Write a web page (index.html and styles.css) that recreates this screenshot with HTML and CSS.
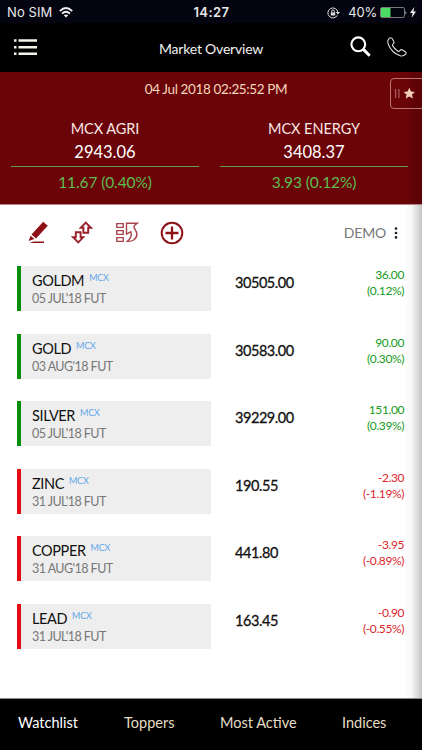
FILE: index.html
```html
<!DOCTYPE html>
<html lang="en">
<head>
<meta charset="utf-8">
<title>Market Overview</title>
<link rel="stylesheet" href="styles.css">
</head>
<body>
<div class="app">
  <div class="status">
    <div class="carrier">No SIM
      <svg width="14" height="11" viewBox="0 0 14 11" fill="none" stroke="#eee" stroke-width="1.9"><path d="M.8 4.1Q7-1.9 13.2 4.1M3 6.6Q7 2.9 11 6.6"/><path d="M7 10.6 4.8 8.3Q7 6.500 9.200 8.300Z" fill="#eee" stroke="none"/></svg>
    </div>
    <div class="clock">14:27</div>
    <div class="power">
      <svg width="13" height="12" viewBox="0 0 13 12" fill="none" stroke="#ddd"><path d="M10.300 8.300A5 5 0 1 1 10.800 5"/><path d="M8.700 5h4.300l-2.100 2.600z" fill="#ddd" stroke="none"/><path d="M3.800 5.500h4.400v3H3.800z" fill="#ddd" stroke="none"/><path d="M4.700 6V4.200a1.300 1.300 0 0 1 2.600 0V6"/></svg>
      <span class="pct">40%</span>
      <svg width="27" height="11" viewBox="0 0 27 11"><rect x=".5" y=".5" width="24" height="10" rx="1.500" fill="none" stroke="#777"/><rect x="1" y="1" width="9.500" height="9" fill="#4cd964"/><path d="M25.500 3.500q1.500 2 0 4z" fill="#ccc"/></svg>
      <svg class="bolt" width="6" height="11" viewBox="0 0 6 11"><path d="M4.300 0 0 6h2.600L1.600 11 6 4.600H3.400z" fill="#eee"/></svg>
    </div>
  </div>
  <header class="nav">
    <svg class="menu" width="23" height="17" viewBox="0 0 23 17" fill="#f4f4ea"><path d="M0 .3h2.500v2.500H0zM4.500.3H23v2.500H4.500zM0 6.900h2.500v2.500H0zM4.500 6.900H23v2.500H4.500zM0 13.500h2.500V16H0zM4.500 13.500H23V16H4.500z"/></svg>
    <h1 class="title">Market Overview</h1>
    <svg class="search" width="21" height="21" viewBox="0 0 21 21" fill="none" stroke="#fff"><circle cx="8.300" cy="8.300" r="6.900" stroke-width="2.100"/><path d="m13.400 13.400 6.300 6.300" stroke-width="3"/></svg>
    <svg class="phone" width="20" height="20" viewBox="0 0 20 20" fill="none" stroke="#ddd" stroke-width="1.100" stroke-linejoin="round"><path d="M1.300 2.500Q2.300.6 4 .7 5.200.8 6.700 4.200 7.500 5.900 6.200 6.900 5 7.700 5.700 8.900 7.700 12.300 11 14.200 12.200 14.800 12.900 13.500 13.900 12.100 15.500 13L18.600 15Q19.600 15.900 18.600 17.100 16.300 19.700 13.200 18.800 4.500 15.800 1.100 6.700.4 4.400 1.300 2.500Z"/></svg>
  </header>
  <section class="summary">
    <div class="date">04 Jul 2018 02:25:52 PM</div>
    <div class="indices">
      <div class="index"><div class="iname">MCX AGRI</div><div class="ival">2943.06</div><div class="ichg">11.67 (0.40%)</div></div>
      <div class="index"><div class="iname">MCX ENERGY</div><div class="ival">3408.37</div><div class="ichg">3.93 (0.12%)</div></div>
    </div>
    <div class="fav"><svg width="22" height="13" viewBox="0 0 22 13"><path d="M.6 2v9M3.900 2v9" stroke="#ad6464" stroke-width="1.100"/><path d="m14.300.8 1.700 3.700 4 .4-3 2.700.9 4-3.600-2.100-3.600 2.100.9-4-3-2.700 4-.4z" fill="#efcfb6"/></svg></div>
  </section>
  <main class="content">
    <div class="tools">
      <svg class="t1" width="21" height="23" viewBox="0 0 21 23" fill="#8f1118"><path d="M3.500 13.500 15.200.8l4.600 4L8 17.500zM2.600 14.800l3.800 3.300L.6 20zM5.500 20.400H16V22H1.500z"/></svg>
      <svg class="t2" width="22" height="23" viewBox="0 0 22 23" fill="none" stroke="#98202a" stroke-width="1.900"><path d="M14.800 1.700l5 5h-2.600v5.100h-4.800V6.700H9.800zM7.200 21.300l-5-5h2.600v-5.100h4.800v5.100h2.600z"/></svg>
      <svg class="t3" width="23" height="21" viewBox="0 0 23 21" fill="none" stroke="#a9444c" stroke-width="1.400"><path d="M.8 1.600h6.400v3.800H.8zM.8 8.600h6.400v3.800H.8zM.8 15.600h6.400v3.800H.8zM10.500 1.300H21Q16.500 3.800 18.800 7q4.600 6.600-1.200 11-2.600 1.600-6.300 1.300Q16.500 15 14.800 9.800L10.500 12z"/></svg>
      <svg class="t4" width="24" height="24" viewBox="0 0 24 24" fill="none" stroke="#8f1118"><circle cx="12" cy="12" r="10.300" stroke-width="2"/><path d="M12 5.500v13M5.500 12h13" stroke-width="2.300"/></svg>
      <span class="demo">DEMO</span>
      <svg class="more" width="4" height="12" viewBox="0 0 4 12" fill="#222"><circle cx="2" cy="1.600" r="1.300"/><circle cx="2" cy="6" r="1.300"/><circle cx="2" cy="10.400" r="1.300"/></svg>
    </div>
    <div class="row up"><div class="card"><div class="sym">GOLDM<span class="mcx">MCX</span></div><div class="exp">05 JUL'18 FUT</div></div><div class="price">30505.00</div><div class="chg">36.00<br>(0.12%)</div></div>
    <div class="row up"><div class="card"><div class="sym">GOLD<span class="mcx">MCX</span></div><div class="exp">03 AUG'18 FUT</div></div><div class="price">30583.00</div><div class="chg">90.00<br>(0.30%)</div></div>
    <div class="row up"><div class="card"><div class="sym">SILVER<span class="mcx">MCX</span></div><div class="exp">05 JUL'18 FUT</div></div><div class="price">39229.00</div><div class="chg">151.00<br>(0.39%)</div></div>
    <div class="row down"><div class="card"><div class="sym">ZINC<span class="mcx">MCX</span></div><div class="exp">31 JUL'18 FUT</div></div><div class="price short">190.55</div><div class="chg">-2.30<br>(-1.19%)</div></div>
    <div class="row down"><div class="card"><div class="sym">COPPER<span class="mcx">MCX</span></div><div class="exp">31 AUG'18 FUT</div></div><div class="price short">441.80</div><div class="chg">-3.95<br>(-0.89%)</div></div>
    <div class="row down"><div class="card"><div class="sym">LEAD<span class="mcx">MCX</span></div><div class="exp">31 JUL'18 FUT</div></div><div class="price short">163.45</div><div class="chg">-0.90<br>(-0.55%)</div></div>
  </main>
  <nav class="tabs"><span class="tab active">Watchlist</span><span class="tab">Toppers</span><span class="tab">Most Active</span><span class="tab">Indices</span></nav>
</div>
</body>
</html>
```
FILE: styles.css
```css
* { box-sizing: border-box; }
body { margin: 0; background: #000; font-family: Lato, "Open Sans", sans-serif; }
svg { display: block; flex: none; }
.app { width: 422px; height: 750px; display: flex; flex-direction: column; overflow: hidden; }
.status { height: 23px; flex: none; background: #03040f; color: #e8e8e8; display: grid; grid-template-columns: 1fr auto 1fr; align-items: center; font: 13px/23px Inter, sans-serif; padding: 1px 6px 0 7px; }
.carrier { display: flex; gap: 7px; align-items: center; letter-spacing: .1px; }
.clock { font-weight: 600; letter-spacing: .45px; }
.power { display: flex; align-items: center; justify-content: flex-end; }
.pct { margin: 0 3px 0 8px; letter-spacing: -.2px; }
.bolt { margin-left: 3px; }
.nav { height: 49px; flex: none; display: flex; align-items: center; padding: 0 15px 0 14px; color: #f2f2f0; }
.title { flex: 1; margin: 2px 0 0 10px; padding-left: 112px; font-size: 14px; line-height: 20px; font-weight: 400; letter-spacing: -.2px; white-space: nowrap; }
.search { margin-right: 16px; margin-top: -2px; }
.phone { margin-top: -1px; }
.summary { height: 133px; flex: none; background: linear-gradient(90deg, #6b0408 96%, #590306); position: relative; padding-top: 7px; border-bottom: 1px solid #b78487; }
.date { text-align: center; font-size: 13.500px; line-height: 20px; letter-spacing: -.37px; color: #f5d9bd; padding-left: 10px; }
.indices { display: grid; grid-template-columns: 188px 188px; gap: 21px; padding: 20px 0 0 11px; text-align: center; }
.iname { font-size: 14.500px; line-height: 20px; letter-spacing: -.05px; color: #f7e6e3; }
.ival { font-size: 16.500px; line-height: 27px; height: 28px; color: #fff; border-bottom: 1px solid #659c45; }
.ichg { font-size: 15.500px; line-height: 31px; letter-spacing: -.1px; color: #5dbc50; }
.fav { position: absolute; right: -3px; top: 6px; width: 35px; height: 31px; border: 1px solid #b77670; border-radius: 4px; padding: 8px 0 0 4px; }
.content { flex: 1; background: linear-gradient(90deg, #fff 95.700%, #f7f7f7 97.500%, #c4c4c4); padding: 0 18px 0 17px; }
.tools { display: flex; align-items: center; height: 55px; padding-left: 11px; margin-bottom: 6px; }
.t2 { margin-left: 22px; }
.t3 { margin-left: 23px; }
.t4 { margin-left: 21px; }
.demo { margin-left: auto; font-size: 14px; letter-spacing: -.2px; color: #777; }
.more { margin: 0 6px 0 8px; }
.row { height: 45px; margin-bottom: 22.500px; display: flex; }
.card { width: 194px; background: #eee; border-left: 4px solid #078f0b; padding: 5px 0 0 11px; }
.sym { font-size: 14.500px; line-height: 19px; height: 19px; letter-spacing: -.4px; color: #111; display: flex; }
.mcx { font-size: 9px; line-height: 13px; letter-spacing: -.2px; color: #5fa7e9; margin-left: 5px; }
.exp { font-size: 12.500px; line-height: 17px; letter-spacing: -.55px; color: #777; }
.price { margin-left: 24px; font-size: 14.500px; line-height: 33px; letter-spacing: -.45px; color: #111; -webkit-text-stroke: .3px #111; }
.short { letter-spacing: -.4px; }
.chg { margin-left: auto; text-align: right; font-size: 12px; line-height: 16px; letter-spacing: -.4px; color: #159a1c; padding-top: 1px; }
.down .card { border-color: #e50b12; }
.down .chg { color: #db262b; }
.tabs { height: 52px; flex: none; border-top: 1px solid #888; background: #000; display: flex; padding-left: 18px; color: #e6dec3; font-size: 14.500px; line-height: 47px; }
.tab { white-space: nowrap; }
.tab:nth-child(1) { width: 106px; }
.tab:nth-child(2) { width: 96px; }
.tab:nth-child(3) { width: 122px; }
.active { color: #fff; }
```
